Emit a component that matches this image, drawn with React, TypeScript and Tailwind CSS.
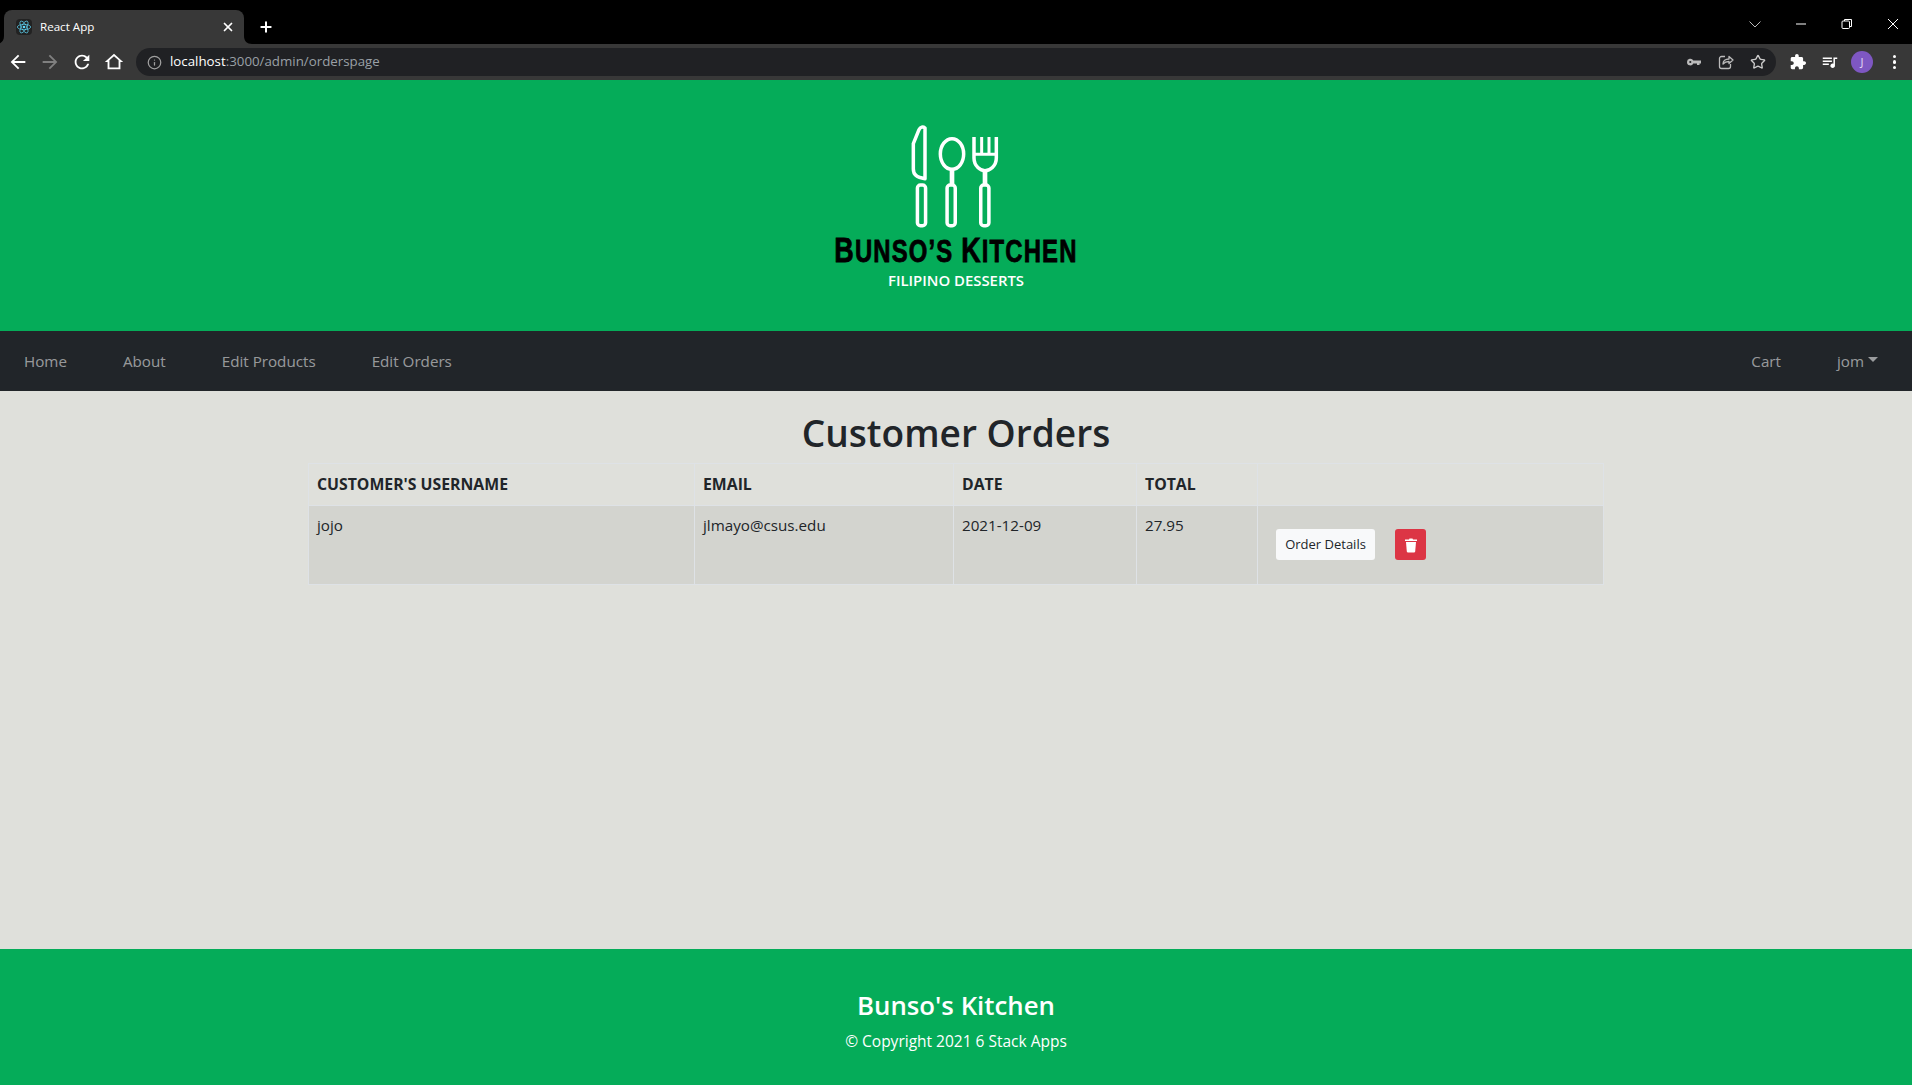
import React from "react";
import { Info, Star, X, Plus } from "lucide-react";

const font = "font-['Open_Sans','Noto_Sans',sans-serif]";

function Logo() {
  return (
    <div className="flex flex-col items-center w-[320px]">
      <svg width="93.33" height="106.67" viewBox="330 40 280 320" fill="none" stroke="white" strokeWidth="10.5" className="block">
        <path d="M378 55 C372 50 364 51 360 60 L343 102 L343 178 C343 195 352 203 378 207 Z" strokeLinejoin="round" />
        <rect x="355.25" y="226" width="24.5" height="122" rx="9" />
        <ellipse cx="459" cy="133" rx="35" ry="46" />
        <path d="M459 180 V224" strokeWidth="14" />
        <rect x="444.25" y="226" width="24.5" height="122" rx="9" />
        <path d="M525 82 V145 C525 170 545 183 558 183 C572 183 592 170 592 145 V82" />
        <path d="M548 82 V132 M570 82 V132 M525 134 H592" strokeWidth="9" />
        <path d="M558 183 V224" strokeWidth="14" />
        <rect x="545.25" y="226" width="24.5" height="122" rx="9" />
      </svg>
      <div className="font-['Liberation_Sans',sans-serif] font-bold text-black text-[31px] leading-[36px] tracking-[1.5px] whitespace-nowrap mt-[2px] scale-x-[0.77] [-webkit-text-stroke:0.8px_black]">
        <span className="text-[35px]">B</span>UNSO’S <span className="text-[35px]">K</span>ITCHEN
      </div>
      <div className={`${font} font-semibold text-white text-[14.9px] leading-[18px] mt-[1px]`}>FILIPINO DESSERTS</div>
    </div>
  );
}

function Flare({ side }: { side: "left" | "right" }) {
  return side === "left" ? (
    <svg width="4" height="8" viewBox="4 0 4 8" fill="#383838" className="absolute bottom-0 left-0"><path d="M8 0 V8 H0 C5 8 8 5 8 0Z" /></svg>
  ) : (
    <svg width="8" height="8" viewBox="0 0 8 8" fill="#383838" className="absolute bottom-0 left-[244px]"><path d="M0 0 V8 H8 C3 8 0 5 0 0Z" /></svg>
  );
}

export default function App() {
  return (
    <div className={`${font} w-full h-[1085px] flex flex-col bg-[#dfe0db] overflow-hidden`}>
      <div className="relative bg-black h-[44px] flex items-end pl-[4px] shrink-0">
        <Flare side="left" />
        <Flare side="right" />
        <div className="w-[240px] h-[34px] bg-[#383838] rounded-t-[8px] flex items-center pl-[12px] pr-[9px] gap-[8px]">
          <svg width="16" height="16" viewBox="-12 -12 24 24" fill="none" stroke="#61dafb" strokeWidth="1" className="bg-[#222] rounded-sm">
            <circle r="2" fill="#61dafb" stroke="none" />
            <ellipse rx="10" ry="4" />
            <ellipse rx="10" ry="4" transform="rotate(60)" />
            <ellipse rx="10" ry="4" transform="rotate(120)" />
          </svg>
          <span className="text-white text-[11.6px] flex-1">React App</span>
          <X size={14} color="white" strokeWidth={3} />
        </div>
        <div className="h-[34px] flex items-center ml-[14px]"><Plus size={16} color="white" strokeWidth={3} /></div>
        <div className="flex-1 h-[44px] pt-[4px] flex items-center justify-end gap-[30px] pr-[11px]">
          <svg width="16" height="16" viewBox="0 0 16 16" fill="none" stroke="#bbb"><path d="M2.5 5.5L8 11L13.5 5.5" /></svg>
          <svg width="16" height="16" viewBox="0 0 16 16" fill="none" stroke="white"><path d="M3 8H13" /></svg>
          <svg width="16" height="16" viewBox="0 0 16 16" fill="none" stroke="white"><rect x="3" y="5" width="7.5" height="7.5" rx="1" /><path d="M5.5 5V3.5H12.5V10.5H10.5" /></svg>
          <svg width="16" height="16" viewBox="0 0 16 16" fill="none" stroke="white"><path d="M3 3L13 13M13 3L3 13" /></svg>
        </div>
      </div>
      <div className="bg-[#383838] h-[36px] flex items-center shrink-0 pl-[7px]">
        <div className="flex items-center gap-[10px]">
          <svg width="22" height="22" viewBox="0 0 24 24" fill="white"><path d="M20 11H7.83l5.59-5.59L12 4l-8 8 8 8 1.41-1.41L7.83 13H20v-2z" /></svg>
          <svg width="22" height="22" viewBox="0 0 24 24" fill="#808080"><path d="M4 11h12.17l-5.59-5.59L12 4l8 8-8 8-1.41-1.41L16.17 13H4v-2z" /></svg>
          <svg width="22" height="22" viewBox="0 0 24 24" fill="white"><path d="M17.65 6.35C16.2 4.9 14.21 4 12 4c-4.42 0-7.99 3.58-7.99 8s3.57 8 7.99 8c3.73 0 6.84-2.55 7.73-6h-2.08c-.82 2.33-3.04 4-5.65 4-3.31 0-6-2.69-6-6s2.69-6 6-6c1.66 0 3.14.69 4.22 1.78L13 11h7V4l-2.35 2.35z" /></svg>
          <svg width="22" height="22" viewBox="0 0 24 24" fill="white" fillRule="evenodd"><path d="M12 5.69l5 4.5V18H7v-7.81l5-4.5M12 3L2 12h3v8h14v-8h3L12 3z" /></svg>
        </div>
        <div className="w-[1640px] h-[28px] ml-[11px] bg-[#202124] rounded-full flex items-center pl-[11px] pr-[10px]">
          <Info size={15} color="#a0a0a0" strokeWidth={2} />
          <span className="text-[13.3px] ml-[8px] text-white">localhost<span className="text-[#9aa0a6]">:3000/admin/orderspage</span></span>
          <div className="flex-1" />
          <div className="flex items-center gap-[16px]">
            <svg width="16" height="16" viewBox="0 0 16 16" fill="#bbb"><path d="M1 8a3.3 3.3 0 0 1 6.3-1.4H15V9.500H13.500V11H11V9.500H7.300A3.300 3.300 0 0 1 1 8Z M3.200 8a1.100 1.100 0 1 0 2.200 0a1.100 1.100 0 1 0-2.200 0Z" fillRule="evenodd" /></svg>
            <svg width="16" height="16" viewBox="0 0 16 16" fill="none" stroke="#bbb" strokeWidth="1.300"><path d="M7 2.500H3.500a2 2 0 0 0-2 2V12.500a2 2 0 0 0 2 2H10.500a2 2 0 0 0 2-2V10" /><path d="M5 10C5 7 7.500 5 11 5V2.500L15 6L11 9.500V7.500C8.500 7.500 6.500 8.300 5 10Z" strokeLinejoin="round" /></svg>
            <Star size={16} color="#ccc" strokeWidth={2} />
          </div>
        </div>
        <div className="flex items-center ml-[14px] gap-[16px]">
          <svg width="16" height="16" viewBox="1 1 22 22" fill="white"><path d="M20.5 11H19V7c0-1.100-.9-2-2-2h-4V3.500C13 2.120 11.880 1 10.500 1S8 2.120 8 3.500V5H4c-1.100 0-1.990.9-1.990 2v3.800H3.500c1.490 0 2.700 1.210 2.700 2.700s-1.210 2.700-2.700 2.700H2V20c0 1.100.9 2 2 2h3.800v-1.500c0-1.490 1.210-2.700 2.700-2.700 1.490 0 2.700 1.210 2.700 2.700V22H17c1.100 0 2-.9 2-2v-4h1.500c1.380 0 2.500-1.120 2.500-2.500S21.880 11 20.500 11z" /></svg>
          <svg width="16" height="16" viewBox="2 3 21 18" fill="white"><path d="M15 6H3v2h12V6zm0 4H3v2h12v-2zM3 16h8v-2H3v2zM17 6v8.180c-.31-.11-.65-.18-1-.18-1.660 0-3 1.340-3 3s1.340 3 3 3 3-1.340 3-3V8h3V6h-5z" /></svg>
          <div className="w-[22px] h-[22px] -ml-[3px] rounded-full bg-[#7e57c2] text-[#e5dcf5] text-[11px] flex items-center justify-center">J</div>
          <div className="flex flex-col gap-[2px] ml-[4px]">
            <span className="w-[3.300px] h-[3.300px] bg-white rounded-full" />
            <span className="w-[3.300px] h-[3.300px] bg-white rounded-full" />
            <span className="w-[3.300px] h-[3.300px] bg-white rounded-full" />
          </div>
        </div>
      </div>

      <header className="bg-[#05ac59] h-[251px] flex items-start justify-center shrink-0 pt-[43px]">
        <Logo />
      </header>

      <nav className="bg-[#212529] h-[60px] flex items-center justify-between text-[15.2px] text-[#ffffff8c] shrink-0 px-[24px]">
        <div className="flex gap-[56px]">
          <span>Home</span><span>About</span><span>Edit Products</span><span>Edit Orders</span>
        </div>
        <div className="flex gap-[56px] pr-[10px]">
          <span>Cart</span>
          <span className="flex items-center">jom<span className="ml-[4px] -mt-[2px] border-t-[5px] border-x-[5px] border-x-transparent border-t-[#ffffff8c]" /></span>
        </div>
      </nav>

      <main className="flex-1 flex flex-col items-center">
        <h1 className="text-[37.1px] leading-[48px] font-[550] text-[#212529] mt-[18px] mb-[6px]">Customer Orders</h1>
        <table className="w-[1296px] border-collapse table-fixed text-[#212529] text-[15.2px]">
          <colgroup>
            <col className="w-[386px]" /><col className="w-[259px]" /><col className="w-[183px]" /><col className="w-[121px]" /><col />
          </colgroup>
          <thead>
            <tr className="h-[42px]">
              {["CUSTOMER'S USERNAME", "EMAIL", "DATE", "TOTAL", ""].map((h, i) => (
                <th key={i} className="border border-[#dee2e6] px-[8px] text-left font-bold text-[15.8px]">{h}</th>
              ))}
            </tr>
          </thead>
          <tbody>
            <tr className="bg-[#d3d4cf] h-[79px]">
              <td className="border border-[#dee2e6] px-[8px] pt-[8px] align-top">jojo</td>
              <td className="border border-[#dee2e6] px-[8px] pt-[8px] align-top">jlmayo@csus.edu</td>
              <td className="border border-[#dee2e6] px-[8px] pt-[8px] align-top">2021-12-09</td>
              <td className="border border-[#dee2e6] px-[8px] pt-[8px] align-top">27.95</td>
              <td className="border border-[#dee2e6] pl-[18px] pb-[1px] align-middle">
                <div className="flex items-center gap-[20px]">
                  <button className="h-[31px] w-[99px] bg-[#f8f9fa] rounded-[3px] text-[13px] text-[#212529]">Order Details</button>
                  <button className="h-[31px] w-[31px] bg-[#dc3545] rounded-[3px] flex items-center justify-center">
                    <svg width="14" height="16" viewBox="0 0 14 16" fill="white"><path d="M1 2.500H5L5.500 1.500H8.500L9 2.500H13V4H1Z" /><path d="M2 5H12L11.200 14.500C11.100 15.200 10.700 15.500 10 15.500H4C3.300 15.500 2.900 15.200 2.800 14.500Z" /></svg>
                  </button>
                </div>
              </td>
            </tr>
          </tbody>
        </table>
      </main>

      <footer className="bg-[#05ac59] h-[136px] shrink-0 flex flex-col items-center text-white pt-[39px]">
        <div className="text-[25.8px] leading-[34px] font-semibold">Bunso's Kitchen</div>
        <div className="text-[15.5px] leading-[24px] mt-[7px]">© Copyright 2021 6 Stack Apps</div>
      </footer>
    </div>
  );
}
